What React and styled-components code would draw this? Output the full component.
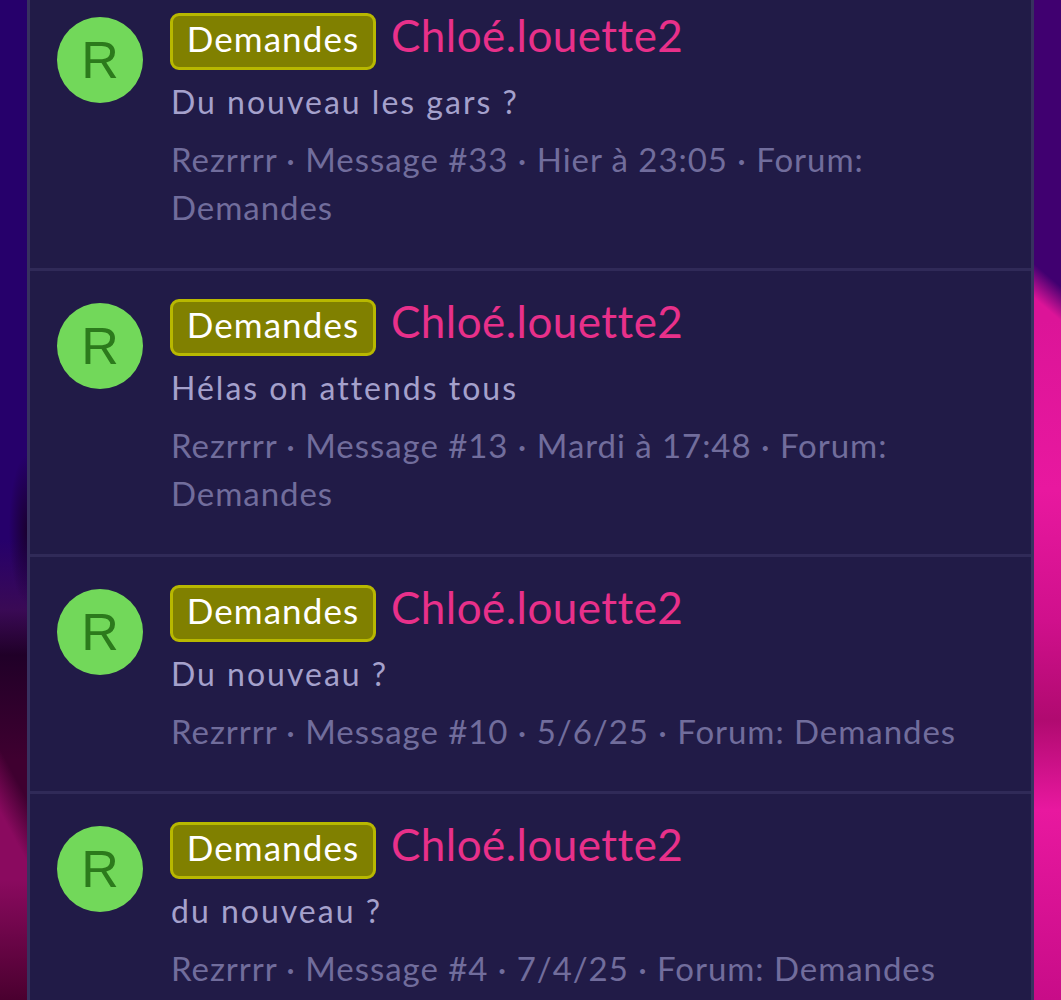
import React from "react";
import styled, { createGlobalStyle } from "styled-components";

const GlobalStyle = createGlobalStyle`
  html, body {
    margin: 0;
    padding: 0;
    height: 1000px;
    overflow: hidden;
    background: #22006a;
  }
`;

const posts = [
  { text: "Du nouveau les gars ?", number: 33, date: "Hier à 23:05" },
  { text: "Hélas on attends tous", number: 13, date: "Mardi à 17:48" },
  { text: "Du nouveau ?", number: 10, date: "5/6/25", short: true },
  { text: "du nouveau ?", number: 4, date: "7/4/25", short: true },
];

const App = () => {
  return (
    <Page>
      <GlobalStyle />
      <Panel>
        {posts.map((post) => (
          <Row key={post.number} $short={post.short}>
            <Avatar>R</Avatar>
            <Body>
              <Title>
                <Badge>Demandes</Badge>
                <Thread>Chloé.louette2</Thread>
              </Title>
              <Message>{post.text}</Message>
              <Meta>
                Rezrrrr · Message #{post.number} · {post.date} · Forum: Demandes
              </Meta>
            </Body>
          </Row>
        ))}
      </Panel>
    </Page>
  );
};

// the wallpaper only shows as two thin strips either side of the panel
const Page = styled.div`
  height: 1000px;
  overflow: hidden;
  padding: 0 27px;
  box-sizing: border-box;
  font-family: "Lato", "Noto Sans", sans-serif;
  background:
    radial-gradient(ellipse 18px 75px at 27px 530px, #1a0030 0%, #1a003000 100%) no-repeat,
    linear-gradient(to bottom, #4a002f00 880px, #4a002f 1000px) left top / 27px 100% no-repeat,
    linear-gradient(241.6deg, #8a0a5f00 380px, #8a0a5f 410px) left top / 27px 100% no-repeat,
    linear-gradient(
        to bottom,
        #26006b 0,
        #26006b 540px,
        #3a0a55 610px,
        #200028 655px,
        #3f0030 760px,
        #3f0030 1000px
      )
      left top / 27px 100% no-repeat,
    linear-gradient(220.5deg, #400070 218px, #40007000 244px) right top / 27px 100% no-repeat,
    linear-gradient(
        to bottom,
        #dc1498 0,
        #dc1498 320px,
        #e8189f 490px,
        #d0108c 620px,
        #b00a70 720px,
        #e8189f 810px,
        #c80c88 1000px
      )
      right top / 27px 100% no-repeat;
`;

const Panel = styled.div`
  margin-top: -15px;
  background: #211b47;
  border-left: 3px solid #37315f;
  border-right: 3px solid #37315f;
`;

const Row = styled.article`
  display: flex;
  gap: 28px;
  padding: 28px 27px 0;
  box-sizing: border-box;
  border-bottom: 3px solid #302a58;
  height: ${(p) => (p.$short ? "237px" : "286px")};
`;

const Avatar = styled.div`
  flex: none;
  width: 86px;
  height: 86px;
  margin-top: 4px;
  border-radius: 50%;
  background: #72d85a;
  color: #2c7a1c;
  font: 52px/86px "Liberation Sans", Arial, sans-serif;
  text-align: center;
`;

const Body = styled.div`
  flex: 1;
  min-width: 0;
`;

const Title = styled.div`
  display: flex;
  align-items: flex-start;
  gap: 15px;
`;

const Badge = styled.span`
  box-sizing: border-box;
  margin-left: -1px;
  width: 206px;
  height: 57px;
  border: 3px solid #b8b800;
  border-radius: 9px;
  background: #808000;
  color: #fff;
  font-size: 35px;
  line-height: 45px;
  letter-spacing: 1.1px;
  text-align: center;
`;

const Thread = styled.span`
  color: #e8308a;
  font-size: 44px;
  line-height: 45px;
  letter-spacing: 0.45px;
`;

const Message = styled.p`
  margin: 8px 0 0;
  color: #a5a1cc;
  font-size: 32px;
  line-height: 48px;
  letter-spacing: 2px;
`;

const Meta = styled.p`
  margin: 9px 0 0;
  color: #716d9c;
  font-size: 33px;
  line-height: 48px;
  letter-spacing: 0.95px;
`;

export default App;
